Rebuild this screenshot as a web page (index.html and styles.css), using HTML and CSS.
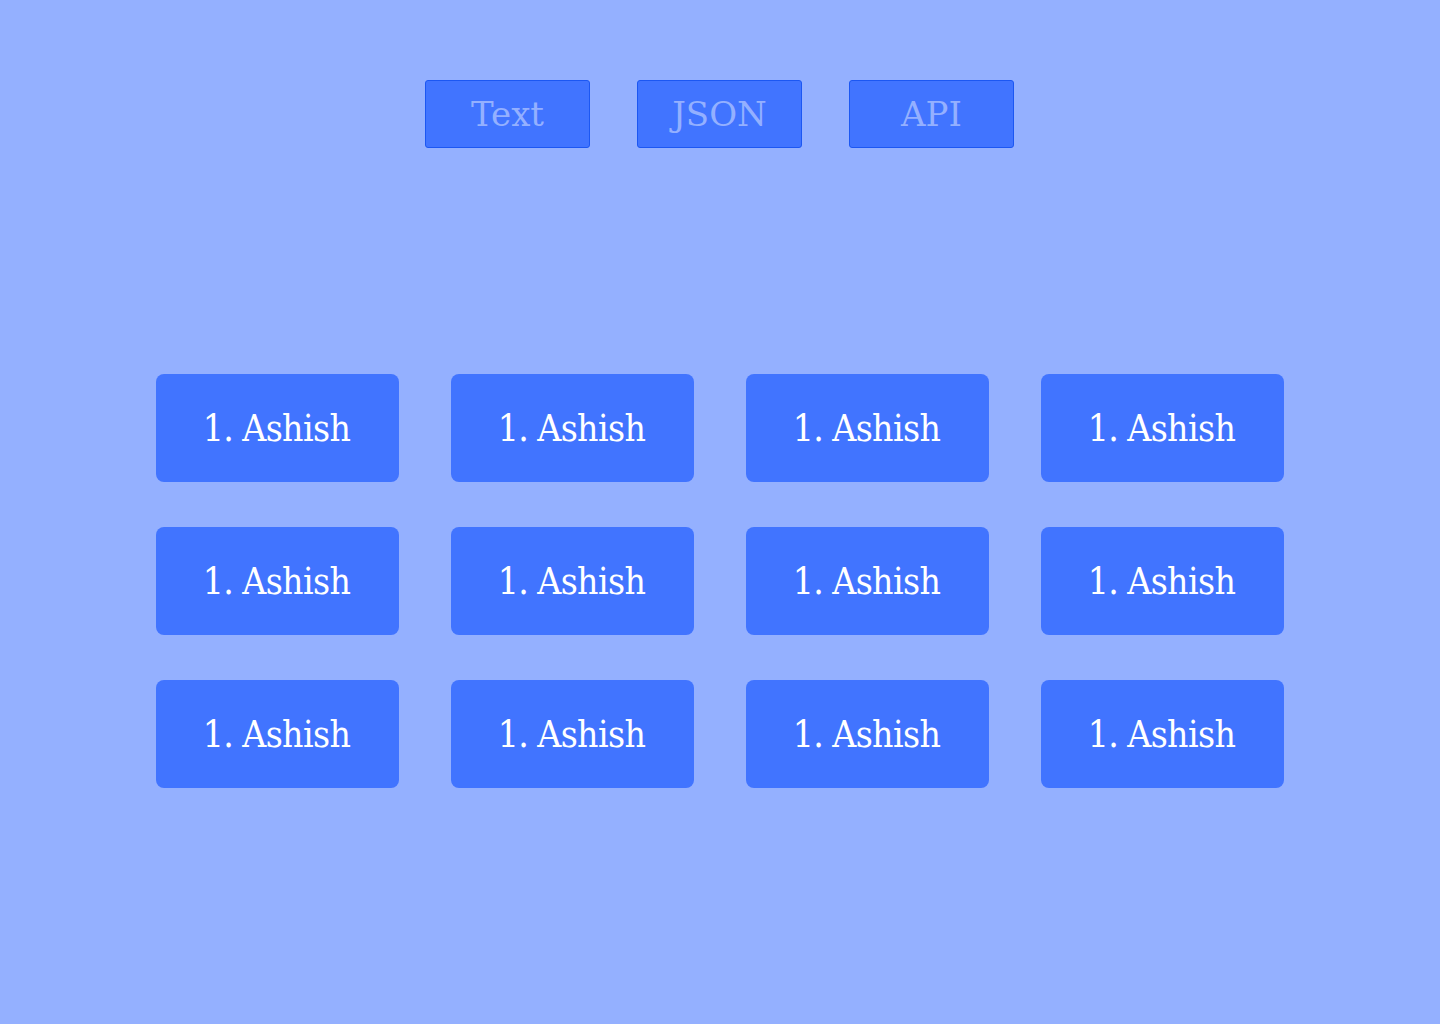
FILE: index.html
```html
<!DOCTYPE html>
<html lang="en">
<head>
<meta charset="utf-8">
<title>Names</title>
<link rel="stylesheet" href="styles.css">
</head>
<body>
<div class="page">
  <nav class="tabs">
    <button class="tab">Text</button>
    <button class="tab">JSON</button>
    <button class="tab">API</button>
  </nav>
  <main class="grid">
    <div class="card">1. Ashish</div>
    <div class="card">1. Ashish</div>
    <div class="card">1. Ashish</div>
    <div class="card">1. Ashish</div>
    <div class="card">1. Ashish</div>
    <div class="card">1. Ashish</div>
    <div class="card">1. Ashish</div>
    <div class="card">1. Ashish</div>
    <div class="card">1. Ashish</div>
    <div class="card">1. Ashish</div>
    <div class="card">1. Ashish</div>
    <div class="card">1. Ashish</div>
  </main>
</div>
</body>
</html>
```

FILE: styles.css
```css
html, body {
  margin: 0;
  padding: 0;
  background: #94b0ff;
  height: 100%;
}
.page {
  font-family: "DejaVu Serif", "Liberation Serif", serif;
  display: flex;
  flex-direction: column;
  align-items: center;
  padding-top: 80px;
}
.tabs {
  display: flex;
  gap: 47px;
  margin-right: 1px;
}
.tab {
  width: 165px;
  height: 68px;
  box-sizing: border-box;
  background: #4174ff;
  border: 1px solid #1c57f2;
  border-radius: 3px;
  color: #94b0ff;
  font-family: inherit;
  font-size: 34px;
  padding: 0;
  cursor: pointer;
}
.grid {
  margin-top: 226px;
  display: grid;
  grid-template-columns: repeat(4, 243px);
  column-gap: 52px;
  row-gap: 45px;
}
.card {
  height: 108px;
  background: #4174ff;
  border-radius: 8px;
  color: #ffffff;
  font-size: 37px;
  font-stretch: condensed;
  letter-spacing: -0.6px;
  word-spacing: -1px;
  display: flex;
  align-items: center;
  justify-content: center;
  padding-right: 2px;
}
```
